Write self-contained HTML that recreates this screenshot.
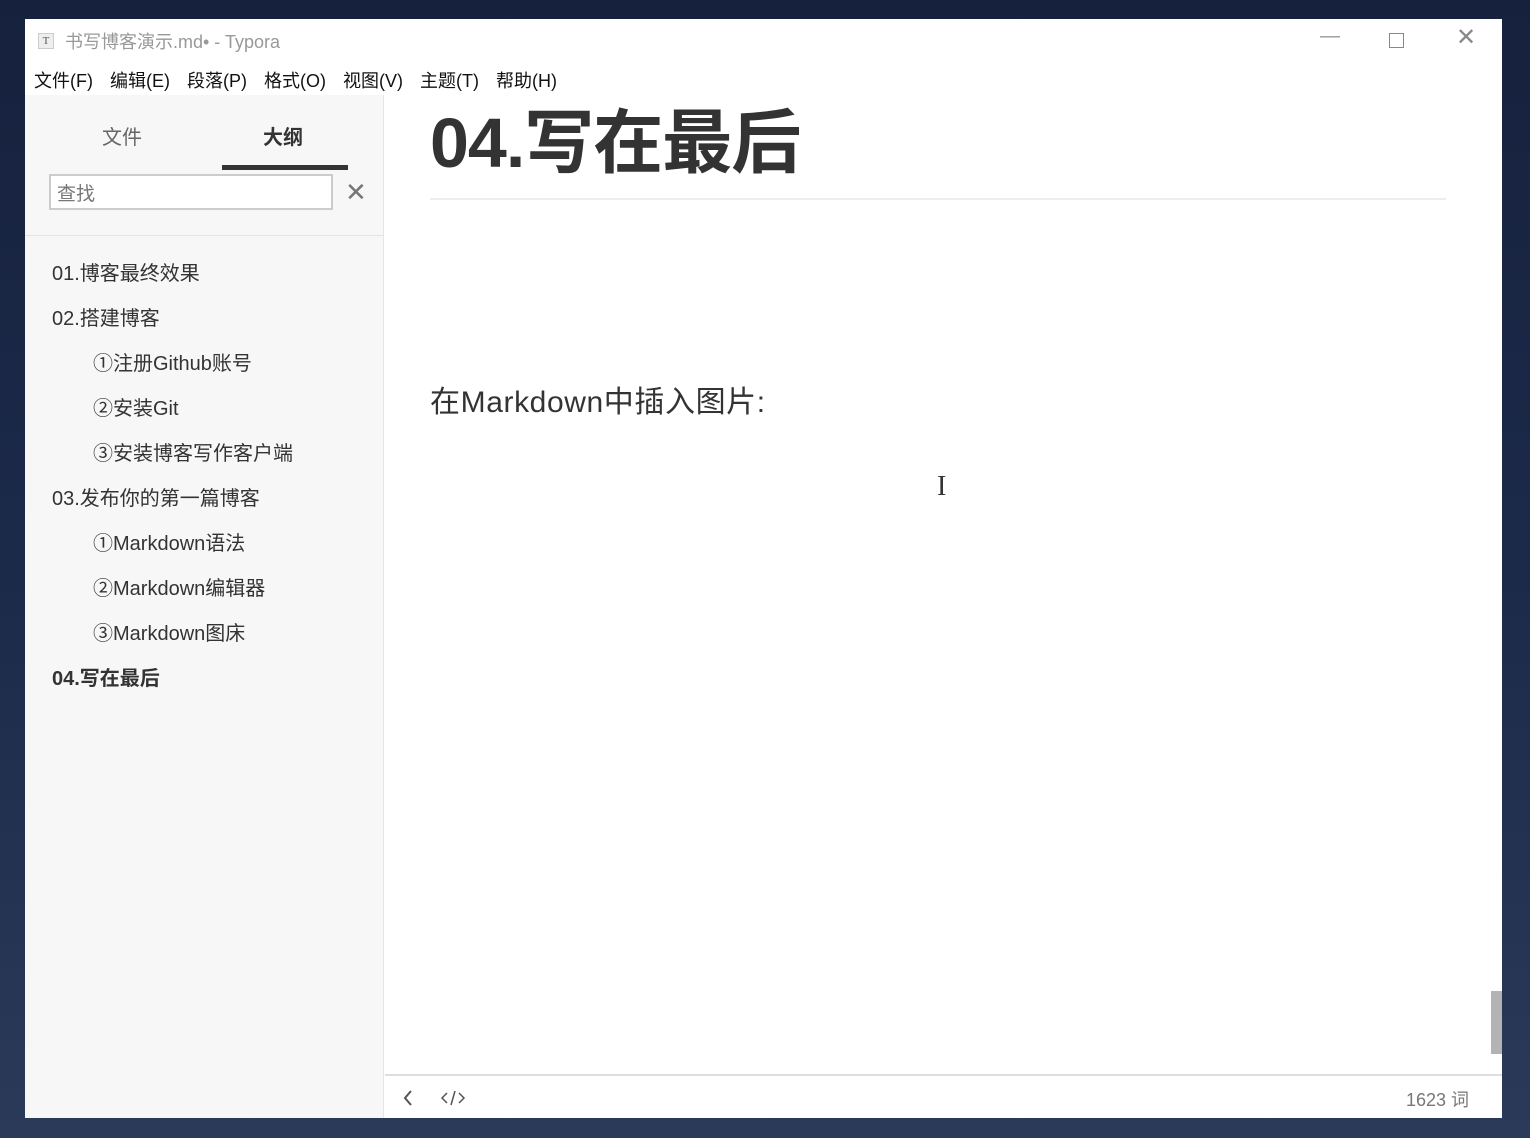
<!DOCTYPE html>
<html><head><meta charset="utf-8"><style>
*{margin:0;padding:0;box-sizing:border-box}
body{width:1530px;height:1138px;background:linear-gradient(180deg,#16213d,#1c2a4a 50%,#2a3a58);position:relative;overflow:hidden;font-family:"Liberation Sans","Noto Sans CJK SC",sans-serif}
.win{position:absolute;left:25px;top:19px;width:1477px;height:1099px;background:#fff}
.title{position:absolute;left:0;top:0;height:42px;width:100%;font-size:18px;color:#999}
.title .t{position:absolute;left:40px;top:9px}
.ticon{position:absolute;left:13px;top:14px;width:16px;height:16px;background:#eee;border:1px solid #ccc;font-size:11px;color:#555;text-align:center;line-height:14px;font-family:"Liberation Serif",serif}
.menu{position:absolute;left:9px;top:48px;font-size:18px;color:#111}
.menu span{margin-right:17px}
.side{position:absolute;left:0;top:76px;width:359px;height:1023px;background:#f7f7f7;border-right:1px solid #e6e6e6}
.tab{position:absolute;top:26px;font-size:20px}
.ul{position:absolute;left:197px;top:70px;width:126px;height:5px;background:#333}
.search{position:absolute;left:24px;top:79px;width:284px;height:36px;border:2px solid #ccc;background:#fff;font-size:19px;color:#777;padding:3px 6px}
.x{position:absolute;left:320px;top:82px;font-size:26px;color:#777}
.sep{position:absolute;left:0;top:140px;width:359px;height:1px;background:#e4e4e4}
.item{position:absolute;font-size:20px;color:#333}
h1{position:absolute;left:405px;top:68px;font-size:70px;font-weight:bold;color:#333;letter-spacing:-1px}
.hr{position:absolute;left:405px;top:179px;width:1016px;height:2px;background:#eee}
.p{position:absolute;left:405px;top:358px;font-size:30px;color:#333;letter-spacing:0.6px}
.foot{position:absolute;left:360px;top:1055px;width:1117px;height:2px;background:#ddd}
.scroll{position:absolute;left:1466px;top:972px;width:11px;height:63px;background:#b3b3b3}
</style></head><body>
<div class="win">
<div class="title"><div class="ticon">T</div><span class="t">书写博客演示.md• - Typora</span>
<span style="position:absolute;left:1295px;top:6px;font-size:20px">—</span>
<span style="position:absolute;left:1364px;top:14px;width:15px;height:15px;border:1px solid #888"></span>
<span style="position:absolute;left:1431px;top:4px;font-size:24px;color:#888">✕</span></div>
<div class="menu"><span>文件(F)</span><span>编辑(E)</span><span>段落(P)</span><span>格式(O)</span><span>视图(V)</span><span>主题(T)</span><span>帮助(H)</span></div>
<div class="side">
<div class="tab" style="left:77px;color:#666">文件</div>
<div class="tab" style="left:238px;font-weight:bold;color:#333">大纲</div>
<div class="ul"></div>
<div class="search">查找</div>
<div class="x">✕</div>
<div class="sep"></div>
<div class="item" style="left:27px;top:162px">01.博客最终效果</div>
<div class="item" style="left:27px;top:207px">02.搭建博客</div>
<div class="item" style="left:68px;top:252px">①注册Github账号</div>
<div class="item" style="left:68px;top:297px">②安装Git</div>
<div class="item" style="left:68px;top:342px">③安装博客写作客户端</div>
<div class="item" style="left:27px;top:387px">03.发布你的第一篇博客</div>
<div class="item" style="left:68px;top:432px">①Markdown语法</div>
<div class="item" style="left:68px;top:477px">②Markdown编辑器</div>
<div class="item" style="left:68px;top:522px">③Markdown图床</div>
<div class="item" style="left:27px;top:567px;font-weight:bold">04.写在最后</div>
</div>
<h1>04.写在最后</h1>
<div class="hr"></div>
<div class="p">在Markdown中插入图片:</div>
<div style="position:absolute;left:912px;top:452px;font-size:28px;color:#333;font-family:'Liberation Serif',serif">I</div>
<div class="scroll"></div>
<div class="foot"></div>
<svg style="position:absolute;left:375px;top:1069px" width="70" height="20"><path d="M11 3 L5 10 L11 17" stroke="#555" stroke-width="2" fill="none"/><path d="M47 5 L42 10 L47 15 M59 5 L64 10 L59 15 M55 3 L51 17" stroke="#555" stroke-width="1.5" fill="none"/></svg>
<div style="position:absolute;left:1381px;top:1067px;font-size:18px;color:#777">1623 词</div>
</div>
</body></html>
